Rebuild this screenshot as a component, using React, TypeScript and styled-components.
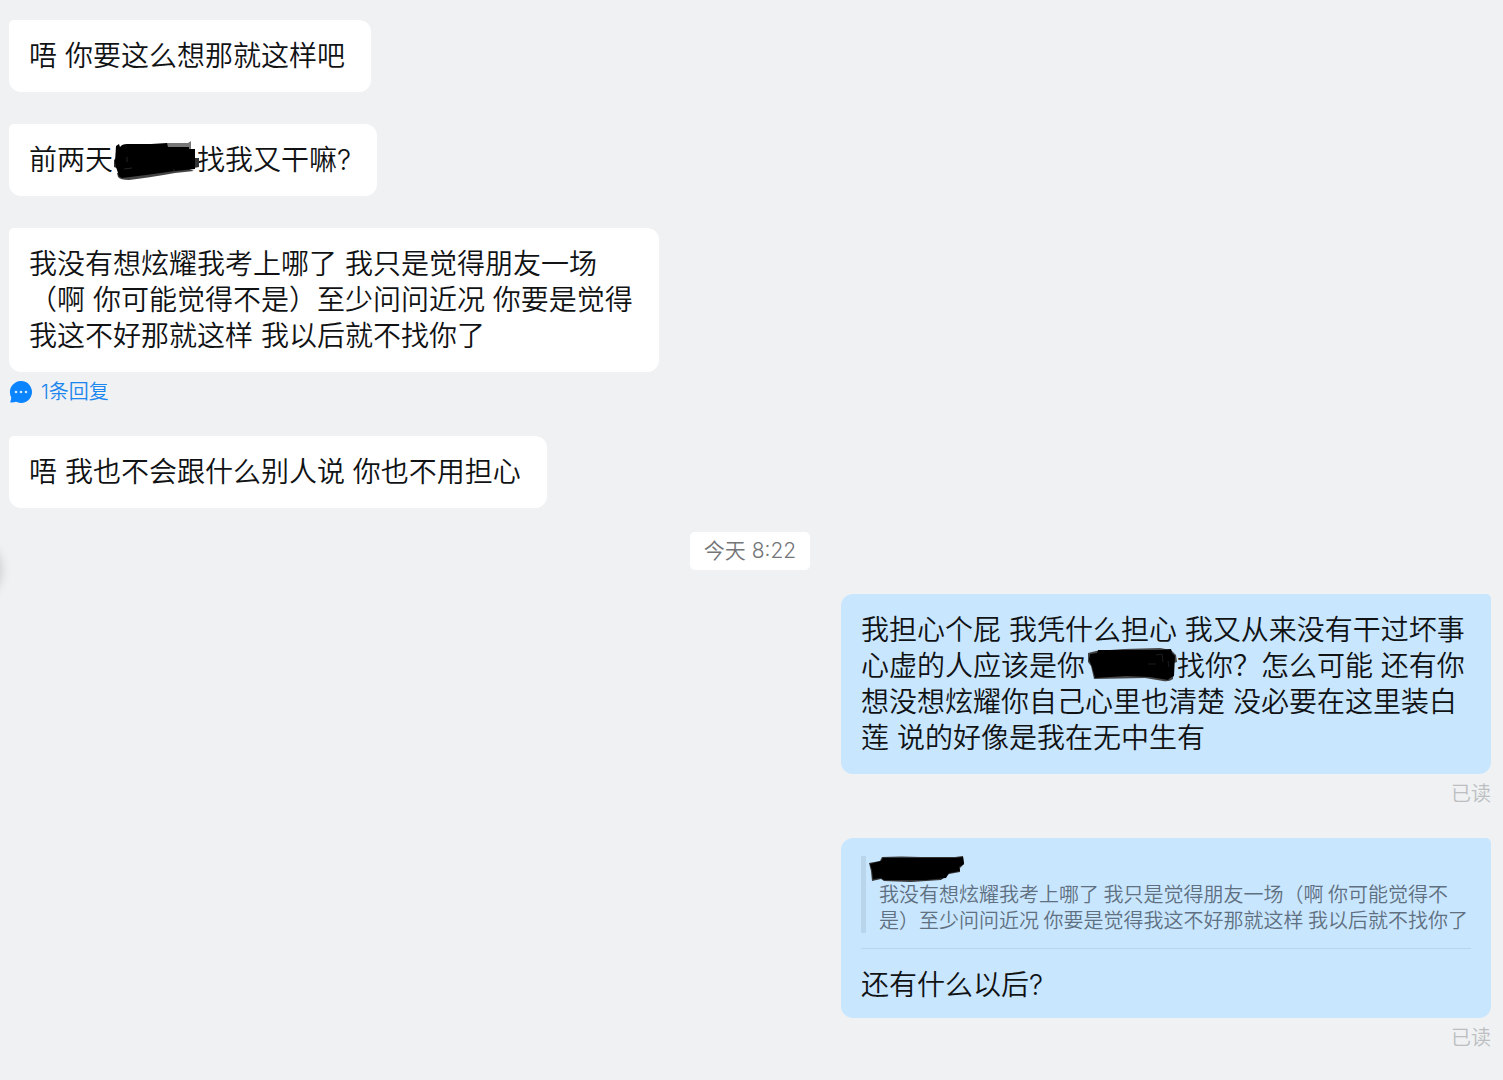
import React from 'react';
import styled, { createGlobalStyle, css } from 'styled-components';

const GlobalStyle = createGlobalStyle`
  *, *::before, *::after { box-sizing: border-box; }
  body {
    margin: 0;
    background: #eff1f3;
    color: #101214;
    font-family: Inter, "Noto Sans CJK SC", sans-serif;
    font-weight: 350;
    overflow-x: hidden;
  }
`;

const Chat = styled.main`
  min-height: 100vh;
  padding: 20px 12px 32px 9px;
`;

const Thread = styled.ol`
  list-style: none;
  margin: 0;
  padding: 0;
  display: flex;
  flex-direction: column;
  gap: 32px;

  & + time + & { margin-top: 24px; }
`;

const Item = styled.li<{ $own?: boolean }>`
  display: flex;
  flex-direction: column;
  align-items: ${p => (p.$own ? 'flex-end' : 'flex-start')};
`;

const Bubble = styled.div<{ $own?: boolean; $quoting?: boolean }>`
  max-width: 650px;
  padding: 18px 26px 18px 20px;
  font-size: 28px;
  line-height: 36px;
  background: ${p => (p.$own ? '#c9e6ff' : '#fff')};
  border-radius: ${p => (p.$own ? '12px 5px 12px 12px' : '5px 12px 12px 12px')};
  ${p => p.$quoting && css`
    padding: 18px 20px 15px;
  `}
`;

const Text = styled.p`
  margin: 0;
`;

const Quote = styled.blockquote`
  margin: 0 0 18px;
  padding-bottom: 15px;
  border-bottom: 1px solid #b8d5ec;
  font-family: "Noto Sans CJK SC", sans-serif;
  font-size: 20px;
  line-height: 26px;
  color: #5f7080;
`;

const QuoteBody = styled.div`
  padding-left: 13px;
  border-left: 5px solid #b8d5ec;
`;

const QuoteName = styled.div`
  height: 25px;
`;

const Slot = styled.span`
  position: relative;
  display: inline-block;
  width: 84px;
  height: 36px;
  vertical-align: top;
`;

const Ink = styled.svg`
  position: absolute;
  top: -4px;
  left: -12px;
  width: 108px;
  height: 44px;
`;

const Replies = styled.button`
  display: flex;
  align-items: center;
  gap: 8px;
  height: 24px;
  margin-top: 8px;
  padding: 0;
  border: 0;
  background: none;
  font: inherit;
  font-size: 20px;
  line-height: 24px;
  color: #1a86ee;
  cursor: pointer;
`;

const ReadMark = styled.small`
  margin-top: 8px;
  font-size: 20px;
  line-height: 24px;
  color: #bcbec1;
`;

const Stamp = styled.time`
  display: block;
  width: fit-content;
  margin: 24px auto 0;
  padding: 0 14px;
  border-radius: 5px;
  background: #fff;
  font-size: 21px;
  line-height: 38px;
  color: #737577;
`;

const EdgeHandle = styled.div`
  position: absolute;
  top: 540px;
  left: -62px;
  width: 60px;
  height: 60px;
  border-radius: 50%;
  background: #fff;
  box-shadow: 0 0 12px 2px rgba(0, 0, 0, 0.2);
`;

type InkShape = 'bar' | 'slab' | 'name';

function Redacted({ shape }: { shape: InkShape }) {
  return (
    <Slot role="img" aria-label="已涂抹">
      {shape === 'bar' && (
        <Ink viewBox="100 138 108 44">
          <path fill="#777" d="M165 143L187 143L190 141L190 149L166 149Z" />
          <path fill="#333" d="M193 158L198 158L198 167L193 168ZM113 160L117 156L118 169L113 167Z" />
          <path fill="#444" d="M116 173L186 168L193 171L174 173Q146 178 128 180Q119 180 117 177Z" />
          <path d="M115 146L118 144L119 147Q121 144 126 144L150 144L166 143L167 147L188 147L188 149L194 149L194 169L174 171Q146 175 121 178Q117 177 117 173L115 167L114 162Z" />
          <path fill="none" stroke="#252525" strokeWidth="1" d="M126 157L126 162M123 169L131 168M173 169L173 171" />
        </Ink>
      )}
      {shape === 'slab' && (
        <Ink viewBox="1081 644 108 44">
          <path fill="#444" d="M1088 653L1096 651L1124 649L1160 648L1171 650L1176 655L1177 662L1174 663L1173 679Q1169 682 1163 681L1145 678L1094 679L1091 666L1088 662Z" />
          <path d="M1090 654L1097 653L1098 650L1130 650L1160 650L1171 649L1172 653L1175 656L1174 676L1170 678L1168 680L1150 677L1126 676L1095 678L1092 667L1089 660Z" />
          <path fill="none" stroke="#1c1c1c" strokeWidth="1" d="M1156 655L1162 654L1163 662M1168 661L1169 667M1148 664L1156 664" />
        </Ink>
      )}
      {shape === 'name' && (
        <Ink viewBox="866 852 108 44">
          <path fill="#333" d="M868 863L879 861L881 857Q900 856 920 857L954 857L962 856L963 864L959 868L959 872L948 874L940 880L910 882L883 881L880 879L871 881L870 871Z" />
          <path d="M869 864L880 861L882 858L920 858L955 858L962 857L963 864L958 867L959 871L948 873L945 878L925 880L883 880L880 878L872 879L871 870Z" />
        </Ink>
      )}
    </Slot>
  );
}

function ReplyIcon() {
  return (
    <svg width="24" height="24" viewBox="0 0 24 24" aria-hidden="true">
      <path fill="#0a84ff" d="M12 1a11 11 0 1 1-5 20.8c-1.5.5-3.5.8-5.3.6C1.300 22.400 1.100 22 1.300 21.700C1.900 20.500 2.200 19 2.200 17.200A11 11 0 0 1 12 1Z" />
      <g fill="#d6eaff">
        <circle cx="7" cy="12" r="1.300" />
        <circle cx="12" cy="12" r="1.300" />
        <circle cx="17" cy="12" r="1.300" />
      </g>
    </svg>
  );
}

export default function App() {
  return (
    <>
      <GlobalStyle />
      <Chat>
        <Thread>
          <Item>
            <Bubble><Text>唔 你要这么想那就这样吧</Text></Bubble>
          </Item>
          <Item>
            <Bubble><Text>前两天<Redacted shape="bar" />找我又干嘛?</Text></Bubble>
          </Item>
          <Item>
            <Bubble>
              <Text>我没有想炫耀我考上哪了 我只是觉得朋友一场（啊 你可能觉得不是）至少问问近况 你要是觉得我这不好那就这样 我以后就不找你了</Text>
            </Bubble>
            <Replies type="button"><ReplyIcon />1条回复</Replies>
          </Item>
          <Item>
            <Bubble><Text>唔 我也不会跟什么别人说 你也不用担心</Text></Bubble>
          </Item>
        </Thread>
        <Stamp>今天 8:22</Stamp>
        <Thread>
          <Item $own>
            <Bubble $own>
              <Text>
                我担心个屁 我凭什么担心 我又从来没有干过坏事心虚的人应该是你 <Redacted shape="slab" />找你？怎么可能 还有你想没想炫耀你自己心里也清楚 没必要在这里装白莲 说的好像是我在无中生有
              </Text>
            </Bubble>
            <ReadMark>已读</ReadMark>
          </Item>
          <Item $own>
            <Bubble $own $quoting>
              <Quote>
                <QuoteBody>
                  <QuoteName><Redacted shape="name" /></QuoteName>
                  <Text>我没有想炫耀我考上哪了 我只是觉得朋友一场（啊 你可能觉得不是）至少问问近况 你要是觉得我这不好那就这样 我以后就不找你了</Text>
                </QuoteBody>
              </Quote>
              <Text>还有什么以后?</Text>
            </Bubble>
            <ReadMark>已读</ReadMark>
          </Item>
        </Thread>
        <EdgeHandle aria-hidden="true" />
      </Chat>
    </>
  );
}
